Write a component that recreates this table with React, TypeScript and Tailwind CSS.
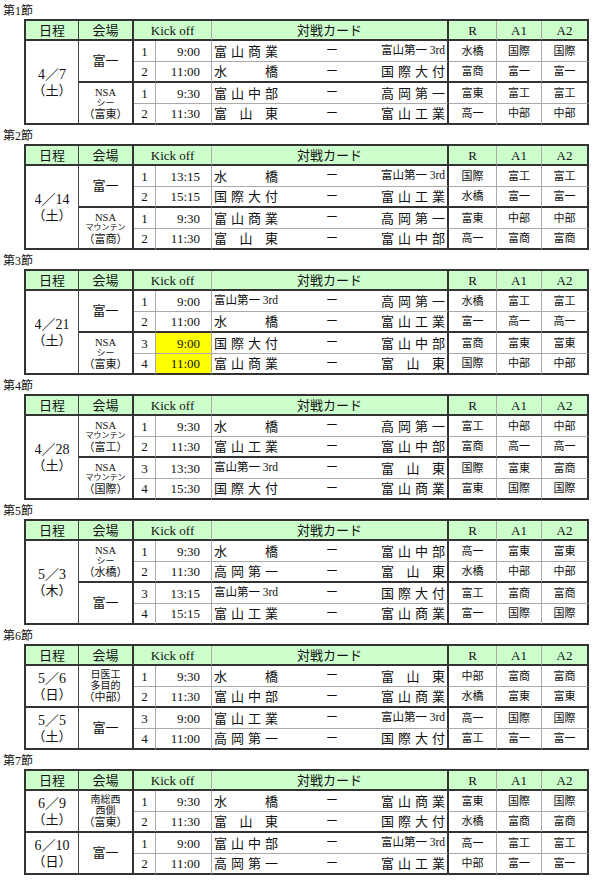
import React from "react";

type Row = {
  no: string;
  time: string;
  home: string;
  away: string;
  r: string;
  a1: string;
  a2: string;
  hl?: boolean;
};

type Venue = { lines: { t: string; cls: string }[] };
type DateCell = { d: string; w: string; span: 2 | 4 };

type Section = {
  title: string;
  dates: DateCell[];
  venues: Venue[];
  rows: Row[];
};

const FUJI: Venue = { lines: [{ t: "富一", cls: "text-[13px] leading-[14px]" }] };
const nsa = (mid: string, team: string): Venue => ({
  lines: [
    { t: "NSA", cls: "text-[10.5px] leading-[11px]" },
    {
      t: mid,
      cls: mid === "シー" ? "text-[9px] leading-[10px]" : "text-[8px] leading-[10px]",
    },
    { t: `（${team}）`, cls: "text-[11px] leading-[12px]" },
  ],
});
const three = (a: string, b: string, c: string): Venue => ({
  lines: [
    { t: a, cls: "text-[10px] leading-[11px]" },
    { t: b, cls: "text-[10px] leading-[11px]" },
    { t: c, cls: "text-[11px] leading-[12px]" },
  ],
});

const sections: Section[] = [
  {
    title: "第1節",
    dates: [{ d: "4／7", w: "（土）", span: 4 }],
    venues: [FUJI, nsa("シー", "富東")],
    rows: [
      { no: "1", time: "9:00", home: "富山商業", away: "富山第一3rd", r: "水橋", a1: "国際", a2: "国際" },
      { no: "2", time: "11:00", home: "水橋", away: "国際大付", r: "富商", a1: "富一", a2: "富一" },
      { no: "1", time: "9:30", home: "富山中部", away: "高岡第一", r: "富東", a1: "富工", a2: "富工" },
      { no: "2", time: "11:30", home: "富山東", away: "富山工業", r: "高一", a1: "中部", a2: "中部" },
    ],
  },
  {
    title: "第2節",
    dates: [{ d: "4／14", w: "（土）", span: 4 }],
    venues: [FUJI, nsa("マウンテン", "富商")],
    rows: [
      { no: "1", time: "13:15", home: "水橋", away: "富山第一3rd", r: "国際", a1: "富工", a2: "富工" },
      { no: "2", time: "15:15", home: "国際大付", away: "富山工業", r: "水橋", a1: "富一", a2: "富一" },
      { no: "1", time: "9:30", home: "富山商業", away: "高岡第一", r: "富東", a1: "中部", a2: "中部" },
      { no: "2", time: "11:30", home: "富山東", away: "富山中部", r: "高一", a1: "富商", a2: "富商" },
    ],
  },
  {
    title: "第3節",
    dates: [{ d: "4／21", w: "（土）", span: 4 }],
    venues: [FUJI, nsa("シー", "富東")],
    rows: [
      { no: "1", time: "9:00", home: "富山第一3rd", away: "高岡第一", r: "水橋", a1: "富工", a2: "富工" },
      { no: "2", time: "11:00", home: "水橋", away: "富山工業", r: "富一", a1: "高一", a2: "高一" },
      { no: "3", time: "9:00", home: "国際大付", away: "富山中部", r: "富商", a1: "富東", a2: "富東", hl: true },
      { no: "4", time: "11:00", home: "富山商業", away: "富山東", r: "国際", a1: "中部", a2: "中部", hl: true },
    ],
  },
  {
    title: "第4節",
    dates: [{ d: "4／28", w: "（土）", span: 4 }],
    venues: [nsa("マウンテン", "富工"), nsa("マウンテン", "国際")],
    rows: [
      { no: "1", time: "9:30", home: "水橋", away: "高岡第一", r: "富工", a1: "中部", a2: "中部" },
      { no: "2", time: "11:30", home: "富山工業", away: "富山中部", r: "富商", a1: "高一", a2: "高一" },
      { no: "3", time: "13:30", home: "富山第一3rd", away: "富山東", r: "国際", a1: "富東", a2: "富商" },
      { no: "4", time: "15:30", home: "国際大付", away: "富山商業", r: "富東", a1: "国際", a2: "国際" },
    ],
  },
  {
    title: "第5節",
    dates: [{ d: "5／3", w: "（木）", span: 4 }],
    venues: [nsa("シー", "水橋"), FUJI],
    rows: [
      { no: "1", time: "9:30", home: "水橋", away: "富山中部", r: "高一", a1: "富東", a2: "富東" },
      { no: "2", time: "11:30", home: "高岡第一", away: "富山東", r: "水橋", a1: "中部", a2: "中部" },
      { no: "3", time: "13:15", home: "富山第一3rd", away: "国際大付", r: "富工", a1: "富商", a2: "富商" },
      { no: "4", time: "15:15", home: "富山工業", away: "富山商業", r: "富一", a1: "国際", a2: "国際" },
    ],
  },
  {
    title: "第6節",
    dates: [
      { d: "5／6", w: "（日）", span: 2 },
      { d: "5／5", w: "（土）", span: 2 },
    ],
    venues: [three("日医工", "多目的", "（中部）"), FUJI],
    rows: [
      { no: "1", time: "9:30", home: "水橋", away: "富山東", r: "中部", a1: "富商", a2: "富商" },
      { no: "2", time: "11:30", home: "富山中部", away: "富山商業", r: "水橋", a1: "富東", a2: "富東" },
      { no: "3", time: "9:00", home: "富山工業", away: "富山第一3rd", r: "高一", a1: "国際", a2: "国際" },
      { no: "4", time: "11:00", home: "高岡第一", away: "国際大付", r: "富工", a1: "富一", a2: "富一" },
    ],
  },
  {
    title: "第7節",
    dates: [
      { d: "6／9", w: "（土）", span: 2 },
      { d: "6／10", w: "（日）", span: 2 },
    ],
    venues: [three("南総西", "西側", "（富東）"), FUJI],
    rows: [
      { no: "1", time: "9:30", home: "水橋", away: "富山商業", r: "富東", a1: "国際", a2: "国際" },
      { no: "2", time: "11:30", home: "富山東", away: "国際大付", r: "水橋", a1: "富商", a2: "富商" },
      { no: "1", time: "9:00", home: "富山中部", away: "富山第一3rd", r: "高一", a1: "富工", a2: "富工" },
      { no: "2", time: "11:00", home: "高岡第一", away: "富山工業", r: "中部", a1: "富一", a2: "富一" },
    ],
  },
];

function Team({ name }: { name: string }) {
  if (name.includes("3rd")) {
    return (
      <div className="w-[64px] flex justify-between items-center text-[11.5px] leading-none">
        <span>富山第一</span>
        <span>3rd</span>
      </div>
    );
  }
  const chars = Array.from(name);
  return (
    <div className="w-[64px] flex justify-between items-center text-[13px] leading-none">
      {chars.map((c, i) => (
        <span key={i}>{c}</span>
      ))}
    </div>
  );
}

const HEAD = "bg-[#ccffcc] flex items-center justify-center text-[13px] leading-none border-b-2 border-b-[#333]";

function Table({ s }: { s: Section }) {
  const cells: React.ReactNode[] = [];
  let dateIdx = 0;
  s.rows.forEach((row, i) => {
    const groupEnd = i === 1 || i === 3;
    const bb = groupEnd ? "border-b-2 border-b-[#333]" : "border-b border-b-[#aaa]";
    if (i === 0 || (i === 2 && s.dates.length === 2)) {
      const d = s.dates[dateIdx++];
      cells.push(
        <div
          key={`d${i}`}
          className={`${d.span === 4 ? "row-span-4" : "row-span-2"} flex flex-col items-center justify-center border-r border-r-[#444] border-b-2 border-b-[#333]`}
        >
          <div className="text-[14px] leading-[16px] h-[16px] overflow-hidden">{d.d}</div>
          <div className="text-[13px] leading-[15px] h-[15px] overflow-hidden">{d.w}</div>
        </div>
      );
    }
    if (i === 0 || i === 2) {
      const v = s.venues[i / 2];
      cells.push(
        <div
          key={`v${i}`}
          className="row-span-2 flex flex-col items-center justify-center border-r-2 border-r-[#333] border-b-2 border-b-[#333]"
        >
          {v.lines.map((l, k) => (
            <div key={k} className={l.cls}>
              {l.t}
            </div>
          ))}
        </div>
      );
    }
    cells.push(
      <div key={`n${i}`} className={`flex items-center justify-center text-[13px] leading-none border-r border-r-[#aaa] ${bb}`}>
        {row.no}
      </div>
    );
    cells.push(
      <div
        key={`t${i}`}
        className={`flex items-center justify-end pr-[11px] text-[13px] leading-none border-r border-r-[#aaa] ${bb} ${row.hl ? "bg-[#ffff00]" : ""}`}
      >
        {row.time}
      </div>
    );
    cells.push(
      <div key={`c${i}`} className={`flex items-center px-[2px] border-r-2 border-r-[#333] ${bb}`}>
        <Team name={row.home} />
        <div className="flex-1 flex justify-center text-[12px] leading-none pl-[5px]">ー</div>
        <Team name={row.away} />
      </div>
    );
    cells.push(
      <div key={`r${i}`} className={`flex items-center justify-center text-[11px] leading-none border-r border-r-[#aaa] ${bb}`}>
        {row.r}
      </div>
    );
    cells.push(
      <div key={`a1${i}`} className={`flex items-center justify-center text-[11px] leading-none border-r border-r-[#aaa] ${bb}`}>
        {row.a1}
      </div>
    );
    cells.push(
      <div key={`a2${i}`} className={`flex items-center justify-center text-[11px] leading-none border-r-2 border-r-[#333] ${bb}`}>
        {row.a2}
      </div>
    );
  });

  return (
    <div className="ml-[24px] w-[565px] grid grid-cols-[53px_55px_22px_56px_237px_48px_45px_47px] grid-rows-[20px_21px_21px_21px_21px] border-t-2 border-l-2 border-[#333]">
      <div className={`${HEAD} border-r border-r-[#444]`}>日程</div>
      <div className={`${HEAD} border-r-2 border-r-[#333]`}>会場</div>
      <div className={`${HEAD} col-span-2 border-r border-r-[#aaa]`}>Kick off</div>
      <div className={`${HEAD} border-r-2 border-r-[#333]`}>対戦カード</div>
      <div className={`${HEAD} border-r border-r-[#aaa] text-[12px]`}>R</div>
      <div className={`${HEAD} border-r border-r-[#aaa] text-[12px]`}>A1</div>
      <div className={`${HEAD} border-r-2 border-r-[#333] text-[12px]`}>A2</div>
      {cells}
    </div>
  );
}

export default function App() {
  return (
    <div className="w-[600px] h-[880px] bg-white text-[#111] font-['Liberation_Serif','Noto_Sans_CJK_JP',serif] overflow-hidden">
      {sections.map((s) => (
        <div key={s.title} className="h-[125px] flex flex-col">
          <div className="h-[19px] flex items-end pl-[3px] pb-[2px] text-[12px] leading-[12px]">{s.title}</div>
          <Table s={s} />
        </div>
      ))}
    </div>
  );
}
